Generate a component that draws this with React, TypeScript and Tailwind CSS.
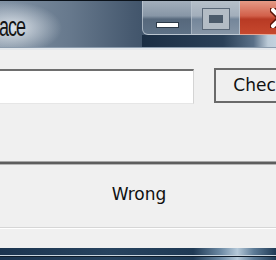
export default function App() {
  return (
    <div className="w-[276px] h-[260px] overflow-hidden flex flex-col bg-[#f0f0f0] font-['DejaVu_Sans',sans-serif]">
      {/* title bar */}
      <div className="h-[50px] shrink-0 flex flex-col border-t border-t-[#0b121a] bg-[radial-gradient(ellipse_50px_26px_at_12px_27px,rgba(226,232,238,0.95),rgba(226,232,238,0)),linear-gradient(to_right,#8192a4_0%,#67798d_25%,#46596f_48%,#2c4159_70%,#1d3149_100%)]">
        <div className="flex flex-1">
          <div className="w-[142px] shrink-0 flex items-start">
            <span className="mt-[15px] ml-[-1px] text-[18px] tracking-[-1px] text-[#141414] font-['Liberation_Sans',sans-serif] scale-y-150 origin-top leading-[15px]">
              ace
            </span>
          </div>
          <div className="flex flex-col shrink-0">
            <div className="flex h-[34px]">
              <div className="w-[50px] shrink-0 flex items-end justify-center pb-[6px] rounded-bl-[6px] border border-t-0 border-[#c5cfd9]/70 bg-[linear-gradient(to_bottom,#a3afbc_0%,#8796a6_45%,#56687c_55%,#5e7186_100%)]">
                <div className="w-[23px] h-[6px] bg-white border border-[#2c3a48]" />
              </div>
              <div className="w-[48px] shrink-0 flex items-center justify-center border-r border-b border-[#c5cfd9]/70 bg-[linear-gradient(to_bottom,#b6c0ca_0%,#a2aebb_45%,#74869a_55%,#8695a6_100%)]">
                <div className="mt-[2px] w-[26px] h-[20px] border-[6px] border-[#bfc7cf]/90 bg-[#4c5b6b] outline outline-1 outline-[#5a6878]" />
              </div>
              <div className="w-[82px] shrink-0 flex items-center justify-center border-b border-[#e6b0a0]/70 bg-[linear-gradient(to_bottom,#e59a86_0%,#d2604a_45%,#b83a24_55%,#c6482e_100%)]">
                <svg width="22" height="20" viewBox="0 0 22 20">
                  <path d="M3 2 L19 18 M19 2 L3 18" stroke="#5a1408" strokeWidth="7" strokeLinecap="round" />
                  <path d="M3 2 L19 18 M19 2 L3 18" stroke="#ffffff" strokeWidth="4" strokeLinecap="round" />
                </svg>
              </div>
            </div>
            <div className="h-[12px] bg-[linear-gradient(to_right,#1b2e44_0%,#2a4058_45%,#5a7088_62%,#bccbd8_70%,#c6d4e0_76%,#5c7288_86%,#22384f_100%)]" />
          </div>
        </div>
        <div className="h-[1px] bg-[#8b9cae]" />
        <div className="h-[2px] bg-[#e4e8ec]" />
      </div>

      {/* client area */}
      <div className="flex-1 flex flex-col pt-[18px]">
        <div className="flex items-start h-[36px]">
          <div className="mt-[1px] ml-[-10px] w-[204px] h-[35px] shrink-0 bg-white border-t-2 border-t-[#6e6e6e] border-x border-x-[#d4d4d4] border-b border-b-[#e6e6e6]" />
          <button className="ml-[20px] w-[90px] h-[35px] shrink-0 bg-[#efefef] border-2 border-[#6a6a6a] text-[17px] text-[#111] leading-none pl-[1px] font-['DejaVu_Sans',sans-serif]">
            Check
          </button>
        </div>

        <div className="mt-[57px] h-[4px] flex flex-col">
          <div className="h-[1px] bg-[#a6a6a6]" />
          <div className="h-[2px] bg-[#5e5e5e]" />
          <div className="h-[1px] bg-[#b4b4b4]" />
        </div>

        <div className="h-[62px] flex items-center justify-center pb-[3px] pl-[2px]">
          <span className="text-[17px] text-[#111]">Wrong</span>
        </div>
        <div className="h-[1px] bg-[#d6d6d6]" />
        <div className="h-[1px] bg-white" />
        <div className="flex-1" />
      </div>

      {/* bottom frame */}
      <div className="h-[12px] shrink-0 flex flex-col bg-[linear-gradient(to_right,#1c3550_0%,#27435f_40%,#1f3a55_70%,#6d8aa4_80%,#b4c8d8_86%,#5d7b96_92%,#1f3a55_100%)]">
        <div className="h-[7px]" />
        <div className="h-[1px] bg-[#c8d4de]" />
        <div className="h-[1px] bg-[#0e1c2a]" />
        <div className="flex-1" />
      </div>
    </div>
  );
}
